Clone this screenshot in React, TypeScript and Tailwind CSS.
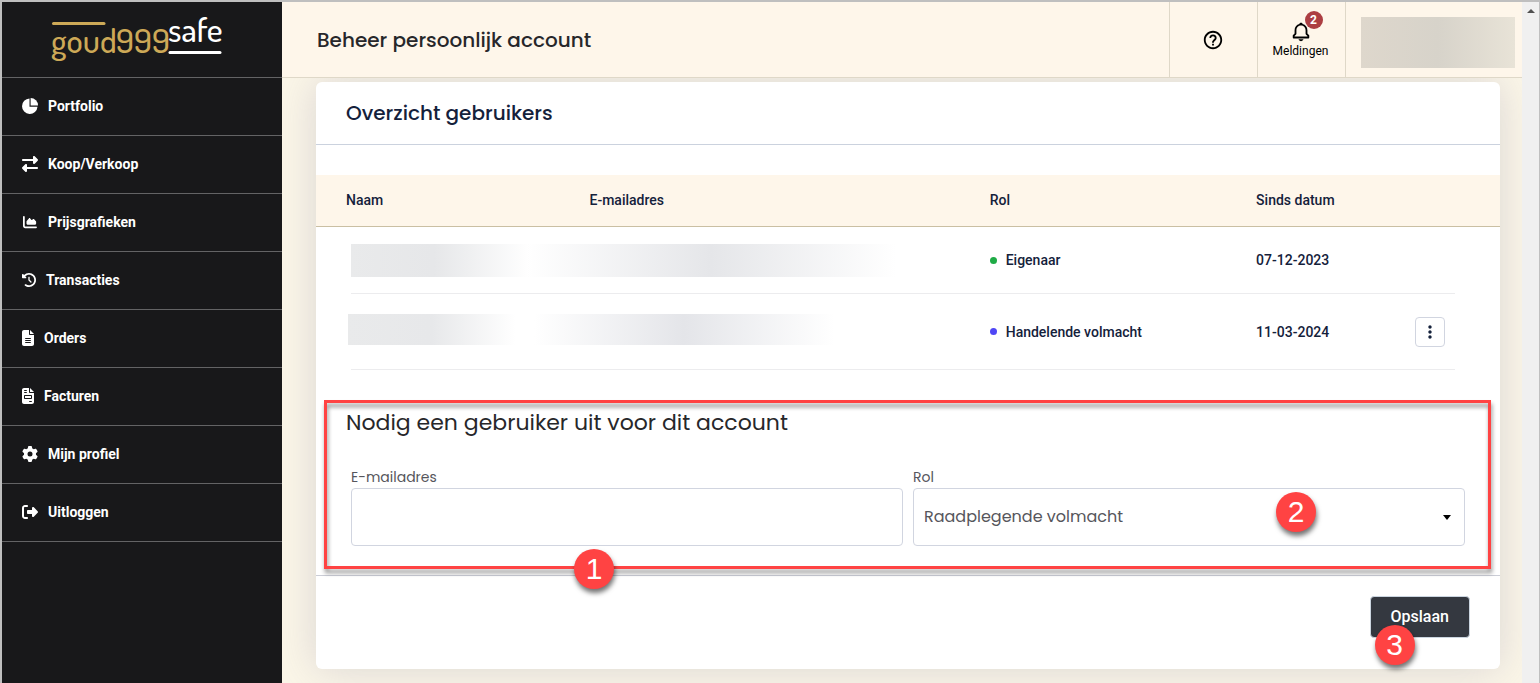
import type { ReactNode } from "react";
import { BiBell, BiDotsVerticalRounded, BiHelpCircle } from "react-icons/bi";
import {
  FaChartArea,
  FaClockRotateLeft,
  FaFileInvoice,
  FaFileLines,
  FaGear,
  FaRightFromBracket,
  FaRightLeft,
} from "react-icons/fa6";

interface NavItem {
  label: string;
  icon: ReactNode;
}

function PieIcon() {
  return (
    <svg width="16" height="16" viewBox="0 0 16 16" fill="currentColor" aria-hidden="true">
      <path d="M7.500 0.500A7.750 7.750 0 1 0 15.500 8.800H7.500z" />
      <path d="M8.600 0A7.400 7.400 0 0 1 16 7.600H8.600z" />
    </svg>
  );
}

const navItems: NavItem[] = [
  { label: "Portfolio", icon: <PieIcon /> },
  { label: "Koop/Verkoop", icon: <FaRightLeft className="h-4 w-4" /> },
  { label: "Prijsgrafieken", icon: <FaChartArea className="h-[14px] w-4" /> },
  { label: "Transacties", icon: <FaClockRotateLeft className="h-4 w-[14px]" /> },
  { label: "Orders", icon: <FaFileLines className="h-4 w-3" /> },
  { label: "Facturen", icon: <FaFileInvoice className="h-4 w-3" /> },
  { label: "Mijn profiel", icon: <FaGear className="h-4 w-4" /> },
  { label: "Uitloggen", icon: <FaRightFromBracket className="h-4 w-4" /> },
];

interface User {
  role: string;
  dot: string;
  since: string;
  hasMenu: boolean;
  cell: string;
  nameBlur: string;
  mailBlur: string;
}

const users: User[] = [
  {
    role: "Eigenaar",
    dot: "bg-[#1fab46]",
    since: "07-12-2023",
    hasMenu: false,
    cell: "h-[67px]",
    nameBlur:
      "h-[33px] bg-linear-to-r from-[#e9eaeb] via-[#e6e7e9] via-35% to-transparent to-75%",
    mailBlur:
      "-ml-16 h-[33px] w-[370px] bg-linear-to-r from-transparent via-[#e5e6e9] via-50% to-transparent",
  },
  {
    role: "Handelende volmacht",
    dot: "bg-[#4f46f5]",
    since: "11-03-2024",
    hasMenu: true,
    cell: "h-[76px]",
    nameBlur:
      "mb-1 -ml-[3px] h-[31px] bg-linear-to-r from-[#e9eaeb] via-[#e7e8ea] via-35% to-transparent to-70%",
    mailBlur:
      "mb-1 -ml-14 h-[31px] w-[300px] bg-linear-to-r from-transparent via-[#e4e5e9] via-50% to-transparent",
  },
];

function Logo() {
  return (
    <svg
      width="180"
      height="66"
      viewBox="0 0 180 66"
      role="img"
      aria-label="goud999safe"
    >
      <g strokeWidth="3" strokeLinecap="round">
        <path d="M5.500 17.500H56" stroke="#cda957" />
        <path d="M122 46.500H172" stroke="#fff" />
      </g>
      <g
        fontFamily="'Dosis', 'Liberation Sans Narrow', 'Open Sans', sans-serif"
        fontWeight="500"
      >
        <text x="3" y="47" fontSize="34" fill="#cda957">
          goud
        </text>
        <text x="68" y="47" fontSize="34" fill="#cda957">
          999
        </text>
        <text x="120" y="36" fontSize="34" fill="#fff">
          safe
        </text>
      </g>
    </svg>
  );
}

function Callout({ value, className }: { value: number; className: string }) {
  return (
    <span
      className={`absolute z-10 flex h-10 w-10 items-center justify-center rounded-full bg-[#ff4343] font-['Liberation_Sans',sans-serif] text-3xl font-normal text-white shadow-[1px_4px_5px_rgba(0,0,0,0.55)] ${className}`}
    >
      {value}
    </span>
  );
}

function Sidebar() {
  return (
    <aside className="w-[280px] shrink-0 bg-[#18181a]">
      <div className="flex h-[76px] justify-center border-b border-[#636365] pt-1 pr-2">
        <Logo />
      </div>
      <nav>
        {navItems.map((item) => (
          <a
            key={item.label}
            href="#"
            className="flex h-[58px] items-center gap-[10px] border-b border-[#636365] px-5 pb-[2px] text-sm font-bold text-white"
          >
            {item.icon}
            {item.label}
          </a>
        ))}
      </nav>
    </aside>
  );
}

function Header() {
  return (
    <header className="relative z-20 flex h-[76px] border-b border-[#dfd8c8] bg-[#fef6ea]">
      <h1 className="flex flex-1 items-center pl-[35px] font-['Poppins','Inter',sans-serif] text-xl font-medium text-[#27272a]">
        Beheer persoonlijk account
      </h1>
      <button
        type="button"
        aria-label="Help"
        className="flex w-[88px] items-center justify-center border-l border-[#dfd8c8] pr-[2px]"
      >
        <BiHelpCircle className="h-[22px] w-[22px]" />
      </button>
      <button
        type="button"
        className="flex w-[88px] flex-col items-center justify-center border-l border-[#dfd8c8] pr-[2px] text-xs text-black"
      >
        <span className="relative">
          <BiBell className="h-[22px] w-[22px]" />
          <span className="absolute -top-[10px] left-[15px] flex h-[18px] w-[18px] items-center justify-center rounded-full bg-[#ac3e42] text-xs font-bold text-white">
            2
          </span>
        </span>
        Meldingen
      </button>
      <div className="flex w-[177px] items-center border-l border-[#dfd8c8] pt-[6px] pr-[7px] pl-[15px]">
        <div className="h-[51px] w-full bg-linear-to-r from-[#ded7cc] via-[#d7d3ca] via-50% to-[#e8e3d7]" />
      </div>
    </header>
  );
}

function UsersTable() {
  return (
    <table className="mt-[30px] w-full table-fixed border-separate border-spacing-0 text-left text-sm text-[#14213b]">
      <colgroup>
        <col className="w-[23.1%]" />
        <col className="w-[33.8%]" />
        <col className="w-[22.5%]" />
        <col className="w-[13.4%]" />
        <col className="w-[7.2%]" />
      </colgroup>
      <thead className="bg-[#fef6ea]">
        <tr className="h-[52px]">
          <th className="border-b border-[#cabfa3] pb-[2px] pl-[30px] font-medium">Naam</th>
          <th className="border-b border-[#cabfa3] pb-[2px] font-medium">E-mailadres</th>
          <th className="border-b border-[#cabfa3] pb-[2px] font-medium">Rol</th>
          <th className="border-b border-[#cabfa3] pb-[2px] font-medium">Sinds datum</th>
          <th className="border-b border-[#cabfa3]" aria-label="Acties" />
        </tr>
      </thead>
      <tbody>
        {users.map((user) => (
          <tr key={user.role}>
            <td className="pl-[35px]">
              <div className={`flex items-center border-b border-[#ececee] ${user.cell}`}>
                <div className={`w-full ${user.nameBlur}`} />
              </div>
            </td>
            <td>
              <div className={`flex items-center border-b border-[#ececee] ${user.cell}`}>
                <div className={user.mailBlur} />
              </div>
            </td>
            <td>
              <div
                className={`flex items-center gap-[9px] border-b border-[#ececee] font-medium ${user.cell}`}
              >
                <span className={`h-[7px] w-[7px] rounded-full ${user.dot}`} />
                {user.role}
              </div>
            </td>
            <td>
              <div
                className={`flex items-center border-b border-[#ececee] font-medium ${user.cell}`}
              >
                {user.since}
              </div>
            </td>
            <td className="pr-[45px]">
              <div className={`flex items-center border-b border-[#ececee] ${user.cell}`}>
                {user.hasMenu && (
                  <button
                    type="button"
                    aria-label="Meer opties"
                    className="flex h-[30px] w-[30px] shrink-0 items-center justify-center rounded border border-[#d1d5e0]"
                  >
                    <BiDotsVerticalRounded className="h-5 w-5" />
                  </button>
                )}
              </div>
            </td>
          </tr>
        ))}
      </tbody>
    </table>
  );
}

function InviteForm() {
  return (
    <form onSubmit={(e) => e.preventDefault()}>
      <div className="relative border-b border-[#cbcdd6] px-[35px] pt-[37px] pb-[29px] font-['Poppins','Inter',sans-serif]">
        <div className="pointer-events-none absolute top-[30px] right-[9px] bottom-[6px] left-2 border-3 border-[#ff4343] drop-shadow-[1px_4px_2px_rgba(0,0,0,0.45)]" />
        <h2 className="-ml-[5px] text-[22px] leading-8 text-[#27272a]">
          Nodig een gebruiker uit voor dit account
        </h2>
        <div className="mt-[27px] grid grid-cols-2 gap-[10px]">
          <div className="relative">
            <label htmlFor="email" className="block text-sm leading-[22px] text-[#56565c]">
              E-mailadres
            </label>
            <input
              id="email"
              type="email"
              className="block h-[58px] w-full rounded border border-[#d1d5e0] bg-white px-[10px] text-[#56565c]"
            />
            <Callout value={1} className="-bottom-[43px] left-[223px]" />
          </div>
          <div className="relative">
            <label htmlFor="role" className="block text-sm leading-[22px] text-[#56565c]">
              Rol
            </label>
            <select
              id="role"
              className="block h-[58px] w-full appearance-none rounded border border-[#d1d5e0] bg-white px-[10px] text-base text-[#56565c]"
            >
              <option>Raadplegende volmacht</option>
              <option>Handelende volmacht</option>
            </select>
            <svg
              width="8"
              height="5"
              viewBox="0 0 8 5"
              className="pointer-events-none absolute right-[14px] bottom-[26px]"
              aria-hidden="true"
            >
              <path d="M0 0h8L4 5z" />
            </svg>
            <Callout value={2} className="right-[149px] bottom-[14px]" />
          </div>
        </div>
      </div>
      <div className="flex justify-end px-[30px] pt-5 pb-[31px]">
        <div className="relative">
          <button
            type="submit"
            className="h-[42px] rounded border border-[#cbd5e0] bg-[#343840] px-5 text-base font-medium text-white"
          >
            Opslaan
          </button>
          <Callout value={3} className="-bottom-[27px] left-[5px]" />
        </div>
      </div>
    </form>
  );
}

export default function App() {
  return (
    <div className="flex min-h-screen border-t-2 border-r border-l-2 border-[#bfbfbf] font-['Roboto',sans-serif]">
      <Sidebar />
      <div className="flex min-w-0 flex-1 flex-col overflow-hidden bg-[#fbf6e8]">
        <Header />
        <main className="flex-1 pt-1 pr-[22px] pb-[14px] pl-[34px]">
          <section className="rounded-md bg-white shadow-[0_0_40px_rgba(120,115,150,0.25)]">
            <h2 className="flex h-[63px] items-center border-b border-[#cbd2de] px-[30px] font-['Poppins','Inter',sans-serif] text-xl font-medium text-[#14213b]">
              Overzicht gebruikers
            </h2>
            <UsersTable />
            <InviteForm />
          </section>
        </main>
      </div>
      <div className="flex w-[17px] shrink-0 justify-center bg-[#f0f0f0] pt-[7px]">
        <svg width="8" height="5" viewBox="0 0 8 5" aria-hidden="true">
          <path d="M4 0l4 4H0z" fill="#505050" />
        </svg>
      </div>
    </div>
  );
}
